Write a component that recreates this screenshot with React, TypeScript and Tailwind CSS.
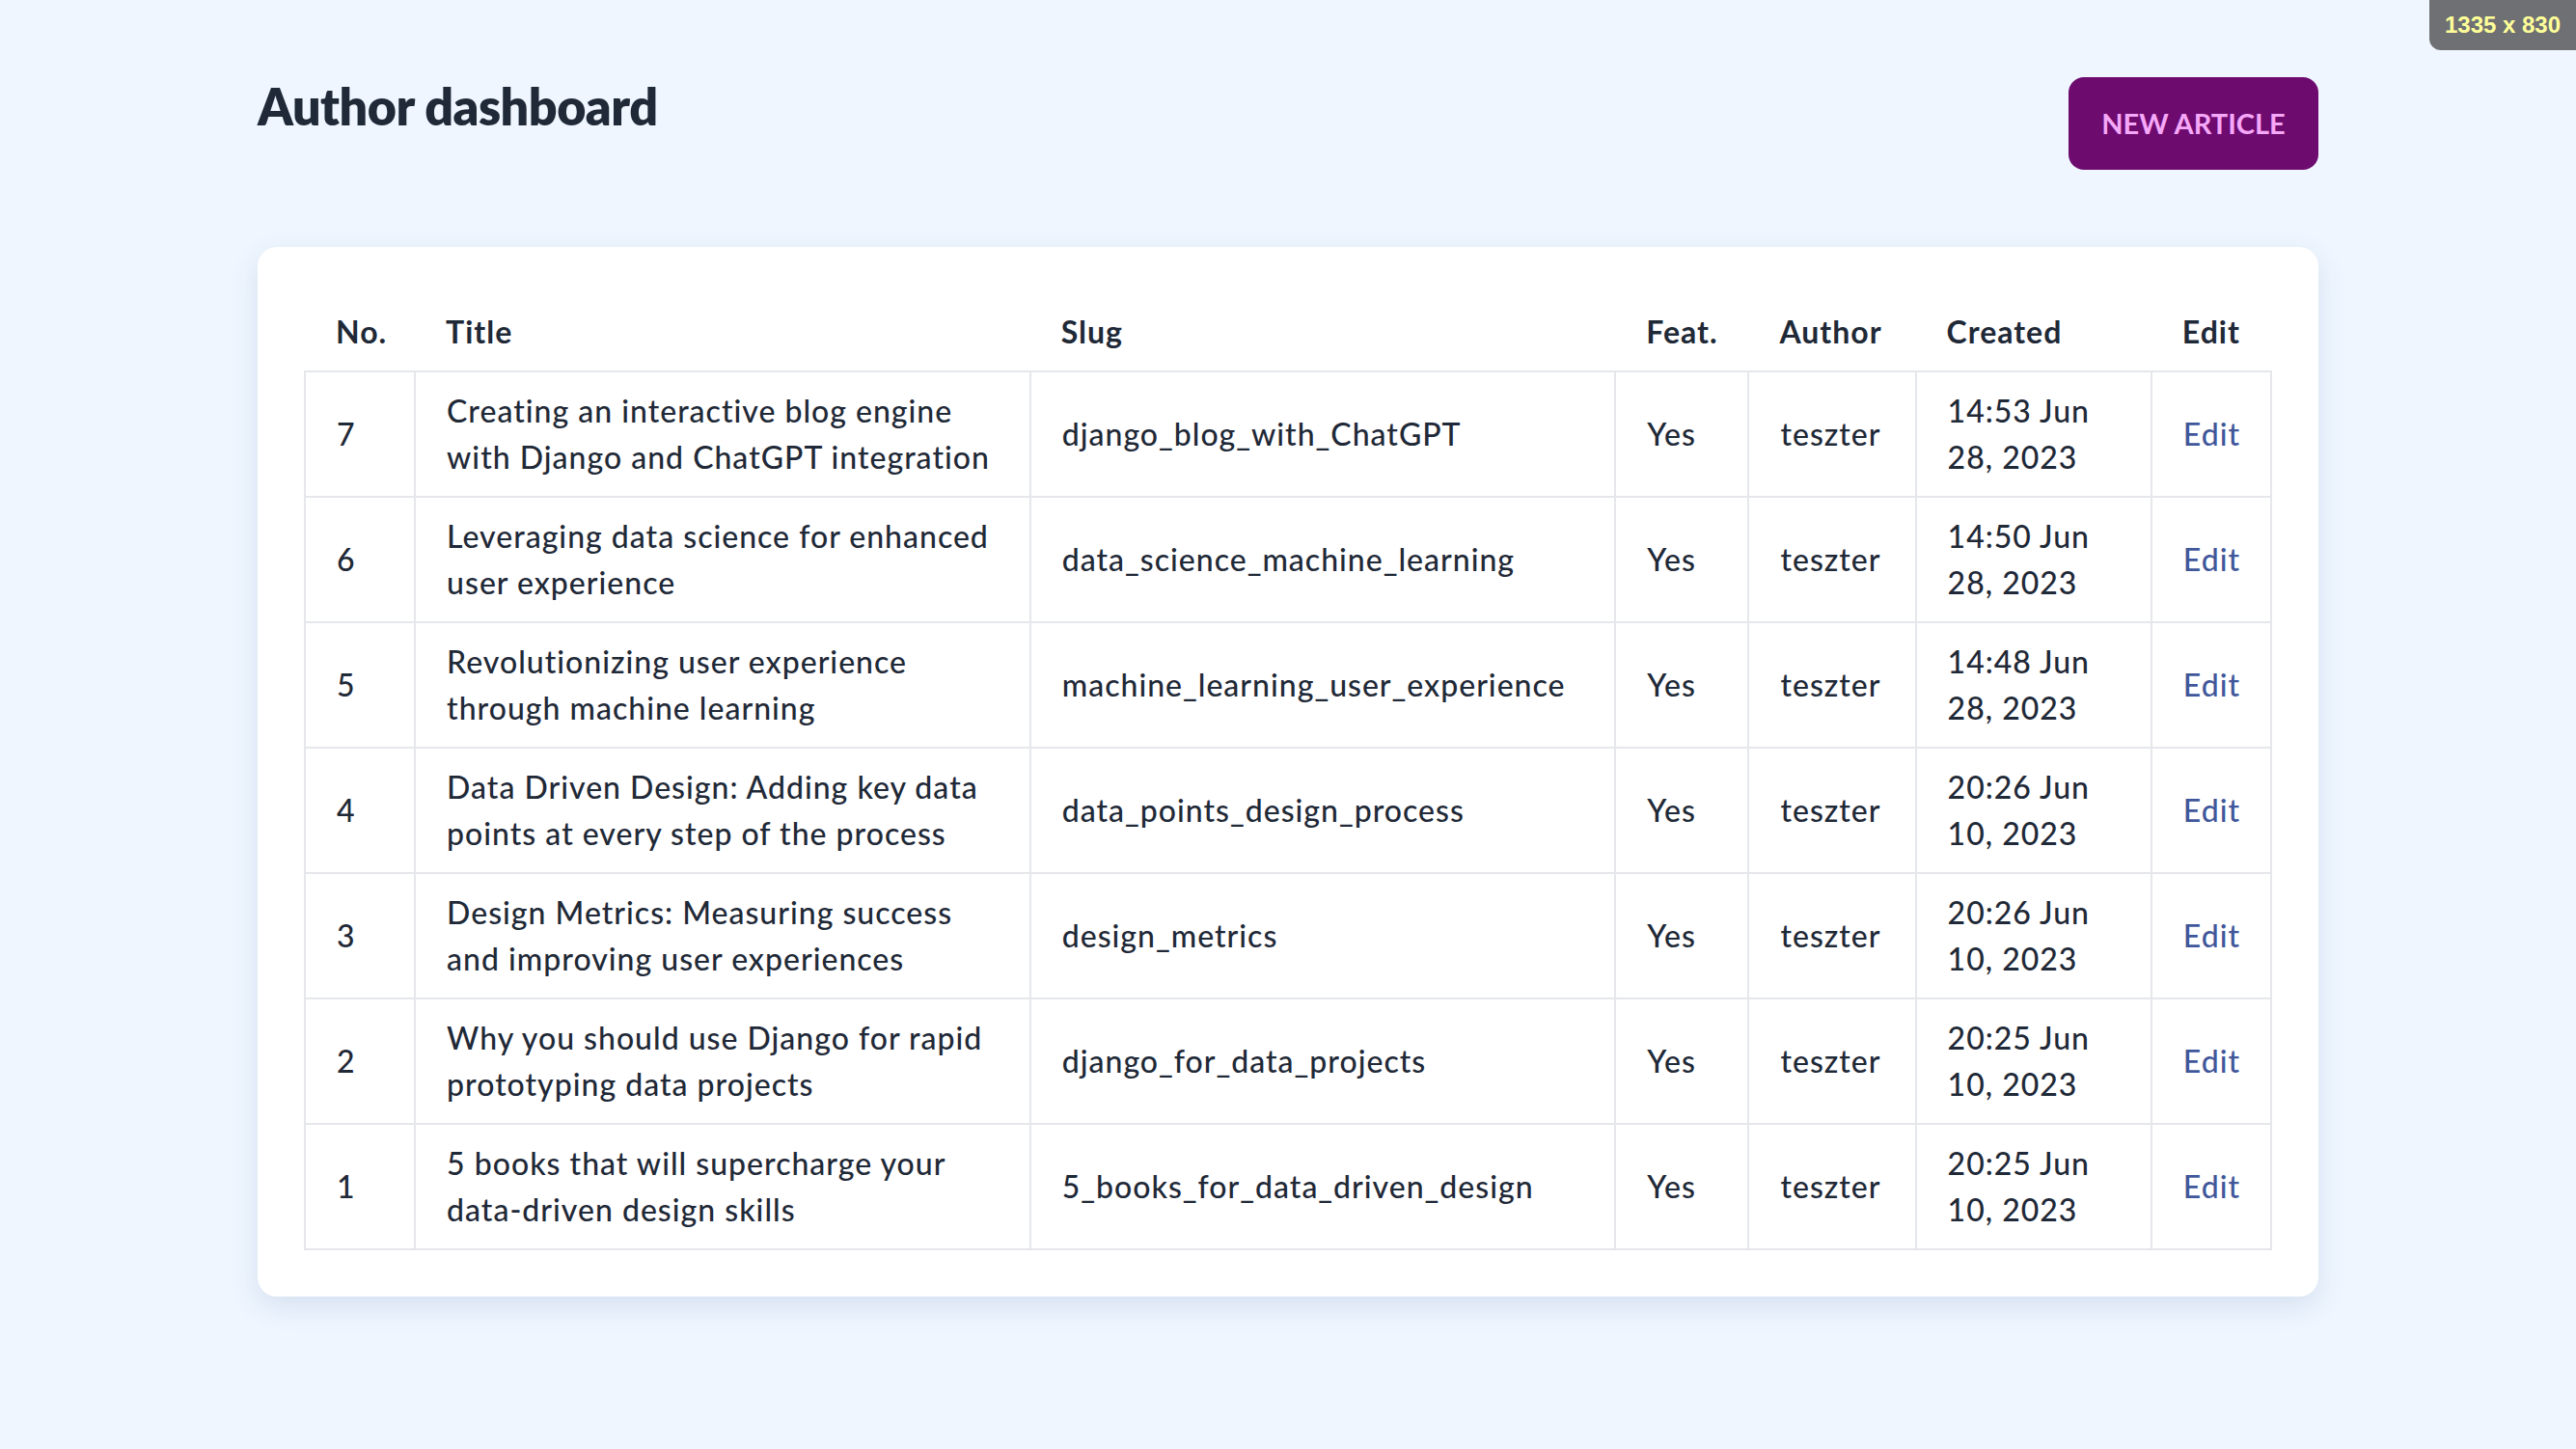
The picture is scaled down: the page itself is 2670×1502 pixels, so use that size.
const articles = [
  {
    no: 7,
    title: ['Creating an interactive blog engine', 'with Django and ChatGPT integration'],
    slug: 'django_blog_with_ChatGPT',
    created: ['14:53 Jun', '28, 2023'],
  },
  {
    no: 6,
    title: ['Leveraging data science for enhanced', 'user experience'],
    slug: 'data_science_machine_learning',
    created: ['14:50 Jun', '28, 2023'],
  },
  {
    no: 5,
    title: ['Revolutionizing user experience', 'through machine learning'],
    slug: 'machine_learning_user_experience',
    created: ['14:48 Jun', '28, 2023'],
  },
  {
    no: 4,
    title: ['Data Driven Design: Adding key data', 'points at every step of the process'],
    slug: 'data_points_design_process',
    created: ['20:26 Jun', '10, 2023'],
  },
  {
    no: 3,
    title: ['Design Metrics: Measuring success', 'and improving user experiences'],
    slug: 'design_metrics',
    created: ['20:26 Jun', '10, 2023'],
  },
  {
    no: 2,
    title: ['Why you should use Django for rapid', 'prototyping data projects'],
    slug: 'django_for_data_projects',
    created: ['20:25 Jun', '10, 2023'],
  },
  {
    no: 1,
    title: ['5 books that will supercharge your', 'data-driven design skills'],
    slug: '5_books_for_data_driven_design',
    created: ['20:25 Jun', '10, 2023'],
  },
];

const td = 'border-2 border-[#e5e7eb] px-8 py-4 align-middle';

const App = () => {
  return (
    <div className="relative min-h-screen bg-[#eff6ff] font-['Lato',sans-serif] text-[#1f2937]">
      <div className="absolute right-0 top-0 flex h-[52px] w-[152px] items-center justify-center rounded-bl-[12px] bg-[#6e7073] font-['Liberation_Sans',sans-serif] text-[24px] font-bold text-[#ffff99]">
        1335 x 830
      </div>

      <div className="mx-auto w-[2136px] pb-20 pt-[80px]">
        <div className="flex items-start justify-between">
          <h1 className="mt-[4px] text-[52px] font-extrabold leading-none tracking-[-0.5px]">
            Author dashboard
          </h1>
          <button className="flex h-[96px] w-[259px] items-center justify-center rounded-[16px] bg-[#6d0b6f] text-[29px] font-bold text-[#f6a8f8]">
            NEW ARTICLE
          </button>
        </div>

        <div className="mt-[80px] rounded-[20px] bg-white p-12 shadow-[0_10px_30px_rgba(30,64,120,0.12)]">
          <table className="w-full table-fixed border-collapse text-left text-[32px] font-medium leading-[48px] tracking-[1px]">
            <thead>
              <tr className="text-[32px] font-extrabold">
                <th className="w-[114px] px-8 py-4">No.</th>
                <th className="w-[637px] px-8 py-4">Title</th>
                <th className="w-[606px] px-8 py-4">Slug</th>
                <th className="w-[138px] px-8 py-4">Feat.</th>
                <th className="w-[173px] px-8 py-4">Author</th>
                <th className="w-[244px] px-8 py-4">Created</th>
                <th className="w-[124px] px-8 py-4">Edit</th>
              </tr>
            </thead>
            <tbody>
              {articles.map((a) => (
                <tr key={a.no}>
                  <td className={td}>{a.no}</td>
                  <td className={td}>
                    {a.title[0]}
                    <br />
                    {a.title[1]}
                  </td>
                  <td className={td}>{a.slug}</td>
                  <td className={td}>Yes</td>
                  <td className={td}>teszter</td>
                  <td className={td}>
                    {a.created[0]}
                    <br />
                    {a.created[1]}
                  </td>
                  <td className={td}>
                    <a href="#" className="text-[#40579a]">
                      Edit
                    </a>
                  </td>
                </tr>
              ))}
            </tbody>
          </table>
        </div>
      </div>
    </div>
  );
};

export default App;
